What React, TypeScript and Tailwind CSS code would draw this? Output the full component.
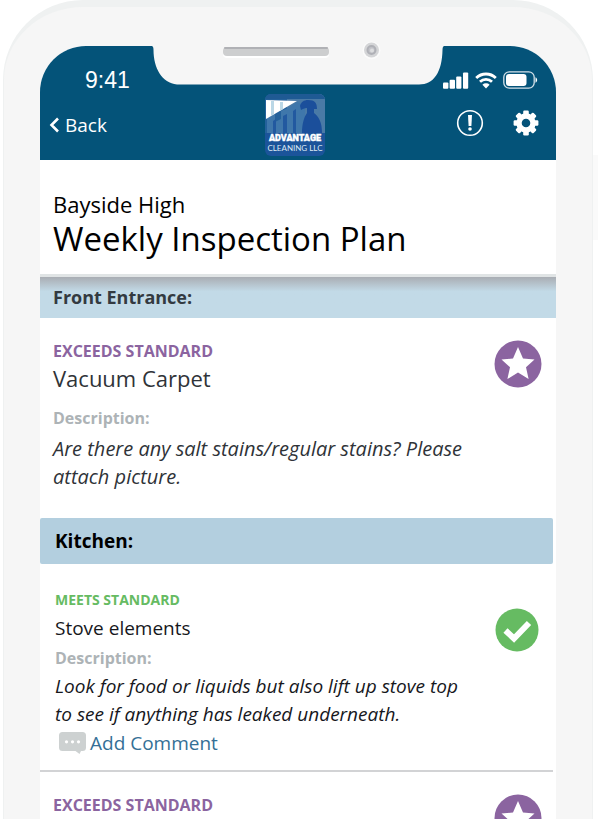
import type { ReactNode } from "react";

type Item = {
  title: string;
  description: string;
};

const vacuum: Item = {
  title: "Vacuum Carpet",
  description: "Are there any salt stains/regular stains? Please attach picture.",
};

const stove: Item = {
  title: "Stove elements",
  description:
    "Look for food or liquids but also lift up stove top to see if anything has leaked underneath.",
};

const gearTeeth = [0, 45, 90, 135, 180, 225, 270, 315];

function StarBadge() {
  return (
    <svg viewBox="0 0 48 48" className="h-12 w-12 shrink-0">
      <circle cx="24" cy="24" r="23.5" fill="#8b64a0" />
      <path
        d="M24 7l5 11.5 11.5.9-8.5 7.8 2.6 11.8L24 32.5 13.4 39 16 27.2l-8.500-7.800L19 18.500z"
        fill="#fff"
      />
    </svg>
  );
}

function CheckBadge() {
  return (
    <svg viewBox="0 0 44 44" className="h-11 w-11 shrink-0">
      <circle cx="22" cy="22" r="21.5" fill="#66bb62" />
      <path d="M10.500 22.500l8.500 8 15-15.500" fill="none" stroke="#fff" strokeWidth="6" />
    </svg>
  );
}

function Logo() {
  return (
    <svg viewBox="0 0 60 62" className="h-[62px] w-[60px]" role="img" aria-label="Advantage Cleaning LLC">
      <defs>
        <clipPath id="logo-clip">
          <rect width="60" height="62" rx="6" />
        </clipPath>
      </defs>
      <g clipPath="url(#logo-clip)">
        <rect width="60" height="62" fill="#1b549a" />
        <path d="M0 0h60v39H0z" fill="#24619b" />
        <path d="M22 0h38v39H22z" fill="#4a7aa6" />
        <path d="M2 39V24l8-4v8l6-3v-8l9-4 7-5 8 3v28z" fill="#3f77ab" />
        <path d="M8 39V27l3-2v14zM18 39V22l4-2v19zM28 39V17l3-2v24z" fill="#2259a0" />
        <path d="M0 0h60v5H0z" fill="#1f5a94" />
        <path d="M1 6l31 1L1 25z" fill="#fff" />
        <path d="M6 7h3v13l-3 2zM15 8h3v7l-3 2z" fill="#bad7e6" />
        <path
          d="M35 12c1-4 4-6 8-6 7 0 9 3 9 9h-3v4c5 4 8 9 8 20H37c0-9 2-16 5-20v-5c-3 0-4 1-6 2z"
          fill="#1b4f9b"
        />
      </g>
      <text
        x="30"
        y="47"
        textAnchor="middle"
        fill="#fff"
        stroke="#fff"
        strokeWidth=".4"
        className="font-['Roboto'] text-[9px] font-black"
      >
        ADVANTAGE
      </text>
      <text x="30" y="57" textAnchor="middle" fill="#dce9f3" className="font-['Lato'] text-[8px]">
        CLEANING LLC
      </text>
    </svg>
  );
}

function SignalIcon() {
  return (
    <svg viewBox="0 0 26 17" className="h-[17px] w-[26px]" fill="#fff">
      <rect y="10.5" width="5.4" height="6.2" rx="1" />
      <rect x="6.6" y="7.8" width="5.4" height="8.9" rx="1" />
      <rect x="13.2" y="4.4" width="5.2" height="12.3" rx="1" />
      <rect x="20" y=".6" width="5.2" height="16.1" rx="1" />
    </svg>
  );
}

function WifiIcon() {
  return (
    <svg viewBox="0 0 22 17" className="h-[17px] w-[22px]" fill="none" stroke="#fff" strokeWidth="2.8">
      <path d="M1.2 6a14 14 0 0 1 19.6 0" />
      <path d="M5 9.8a8.6 8.6 0 0 1 12 0" />
      <path d="M11 16.4l-3.6-3.6a5.1 5.1 0 0 1 7.2 0z" fill="#fff" stroke="none" />
    </svg>
  );
}

function BatteryIcon() {
  return (
    <svg viewBox="0 0 35 18" className="h-[18px] w-[35px]">
      <rect x=".8" y=".8" width="30.4" height="16.4" rx="5.5" fill="none" stroke="#d5e2ea" strokeWidth="1.3" />
      <rect x="3" y="3" width="20.5" height="12" rx="3" fill="#fff" />
      <path d="M32.5 6.3c2.2 1 2.2 4.4 0 5.4z" fill="#fff" />
    </svg>
  );
}

function AlertIcon() {
  return (
    <svg viewBox="0 0 28 28" className="h-7 w-7">
      <circle cx="14" cy="14" r="12.3" fill="none" stroke="#fff" strokeWidth="1.6" />
      <path d="M12 6h4l-.6 11h-2.800z" fill="#fff" />
      <circle cx="14" cy="20" r="1.8" fill="#fff" />
    </svg>
  );
}

function GearIcon() {
  return (
    <svg viewBox="0 0 28 28" className="h-7 w-7">
      <circle cx="14" cy="14" r="7" fill="none" stroke="#fff" strokeWidth="5.4" />
      {gearTeeth.map((angle) => (
        <rect
          key={angle}
          x="11.2"
          y="1.6"
          width="5.6"
          height="5"
          rx="1.2"
          fill="#fff"
          transform={`rotate(${angle} 14 14)`}
        />
      ))}
    </svg>
  );
}

function CommentIcon() {
  return (
    <svg viewBox="0 0 27 22" className="h-[22px] w-[27px]">
      <path
        d="M3.500 0h20A3.500 3.500 0 0 1 27 3.500v12a3.500 3.500 0 0 1-3.500 3.500H22l-1.500 3-4-3h-13A3.500 3.500 0 0 1 0 15.500v-12A3.500 3.500 0 0 1 3.500 0z"
        fill="#cdd1d1"
      />
      <circle cx="7.5" cy="9.8" r="1.6" fill="#fff" />
      <circle cx="13.5" cy="9.8" r="1.6" fill="#fff" />
      <circle cx="19.5" cy="9.8" r="1.6" fill="#fff" />
    </svg>
  );
}

// Bezel cut-out with the speaker grille and the front camera
function Notch() {
  return (
    <div className="absolute inset-x-0 top-[34px] flex justify-center">
      <svg viewBox="0 0 292 44" className="h-11 w-[292px]">
        <path
          d="M0 5h292c-1 .5-1.500 1.500-1.500 4C290 31 282 43.500 267 43.500H25C10 42 1.500 27 1.500 9 1.500 6.500 1 5.500 0 5z"
          fill="#f6f6f6"
        />
        <rect x="71" y="7" width="106" height="10" rx="4" fill="#fff" />
        <rect x="71" y="6" width="106" height="9" rx="4" fill="#cdcecf" />
        <path d="M73 7h102" stroke="#b0b1b5" strokeWidth="2" strokeLinecap="round" />
        <circle cx="219.5" cy="9.500" r="9" fill="#fbfbfb" />
        <circle cx="219.5" cy="9" r="7.5" fill="#d4d5d7" />
        <circle cx="219.5" cy="9" r="4" fill="#c2c3c8" stroke="#afb0b6" strokeWidth="2" />
        <circle cx="220" cy="9.500" r="2" fill="#dcdddf" />
      </svg>
    </div>
  );
}

function Screen({ children }: { children: ReactNode }) {
  return (
    <div className="h-screen overflow-hidden bg-white pr-[5px] pl-[3px]">
      <div className="relative h-full rounded-t-[80px] border-x border-t-[7px] border-[#eff1f1] bg-[#f6f6f6] px-9 pt-[39px]">
        <div className="absolute top-[148px] -right-[6px] h-[85px] w-[5px] bg-[#fafafa]" />
        <div className="h-full overflow-hidden rounded-t-[46px] bg-white">{children}</div>
        <Notch />
      </div>
    </div>
  );
}

function Header() {
  return (
    <header className="h-[114px] bg-[#045379] text-white">
      <div className="flex h-12 items-end justify-between pr-[18px] pl-[45px]">
        <span className="font-['Liberation_Sans'] text-[23px] leading-7">9:41</span>
        <div className="flex h-7 items-center gap-[6px]">
          <SignalIcon />
          <WifiIcon />
          <BatteryIcon />
        </div>
      </div>
      <div className="grid h-[62px] grid-cols-[1fr_auto_1fr] items-center pr-4 pl-[9px]">
        <button type="button" className="flex items-center gap-[5px] text-[19px] leading-7">
          <svg viewBox="0 0 11 16" className="h-4 w-[11px]" fill="none" stroke="#fff" strokeWidth="2.6">
            <path d="M9 1.500L2.500 8 9 14.500" />
          </svg>
          Back
        </button>
        <Logo />
        <div className="flex items-center justify-end gap-7 pb-1">
          <button type="button" aria-label="Alerts">
            <AlertIcon />
          </button>
          <button type="button" aria-label="Settings">
            <GearIcon />
          </button>
        </div>
      </div>
    </header>
  );
}

export default function App() {
  return (
    <Screen>
      <main className="font-['Open_Sans',sans-serif]">
        <Header />
        <div className="h-[117px] border-b-[3px] border-[#e0e4e5] px-[13px] pt-[30px] text-black">
          <p className="text-[22px] leading-7">Bayside High</p>
          <h1 className="text-[33px] leading-[42px]">Weekly Inspection Plan</h1>
        </div>

        <section>
          <h2 className="flex h-[41px] items-center bg-linear-to-b from-[#a9adb3] to-[#c2dae7] to-35% px-[13px] text-[18px] font-bold text-[#333a41]">
            Front Entrance:
          </h2>
          <div className="flex h-[200px] justify-between pt-[22px] pr-[14px] pl-[13px]">
            <div>
              <p className="text-[16px] leading-[22px] font-bold text-[#8b64a0]">EXCEEDS STANDARD</p>
              <h3 className="text-[22px] leading-8 text-[#2f3338]">{vacuum.title}</h3>
              <p className="mt-[10px] text-[16px] leading-7 font-bold text-[#adb3b6]">Description:</p>
              <p className="max-w-[425px] pt-[3px] text-[20px] leading-7 text-[#2f3338] italic">
                {vacuum.description}
              </p>
            </div>
            <StarBadge />
          </div>
        </section>

        <section>
          <h2 className="mr-[3px] flex h-[46px] items-center rounded-xs bg-[#b3cfdf] px-[15px] text-[19px] font-bold text-black">
            Kitchen:
          </h2>
          <div className="mr-[3px] flex h-[208px] items-start justify-between border-b-2 border-[#d2d3d5] pt-6 pr-[14px] pl-[15px]">
            <div>
              <p className="text-[14px] leading-6 font-bold text-[#66bb62]">MEETS STANDARD</p>
              <h3 className="text-[19px] leading-8 font-medium text-[#16171c]">{stove.title}</h3>
              <p className="text-[16px] leading-7 font-bold text-[#adb3b6]">Description:</p>
              <p className="max-w-[420px] text-[19px] leading-7 font-medium text-[#16171c] italic">
                {stove.description}
              </p>
              <button type="button" className="flex items-center gap-1 pl-1 text-[19px] leading-[30px] text-[#347096]">
                <CommentIcon />
                Add Comment
              </button>
            </div>
            <div className="pt-5">
              <CheckBadge />
            </div>
          </div>
        </section>

        <section className="flex justify-between pt-[22px] pr-[14px] pl-[13px]">
          <p className="text-[16px] leading-[22px] font-bold text-[#8b64a0]">EXCEEDS STANDARD</p>
          <StarBadge />
        </section>
      </main>
    </Screen>
  );
}
